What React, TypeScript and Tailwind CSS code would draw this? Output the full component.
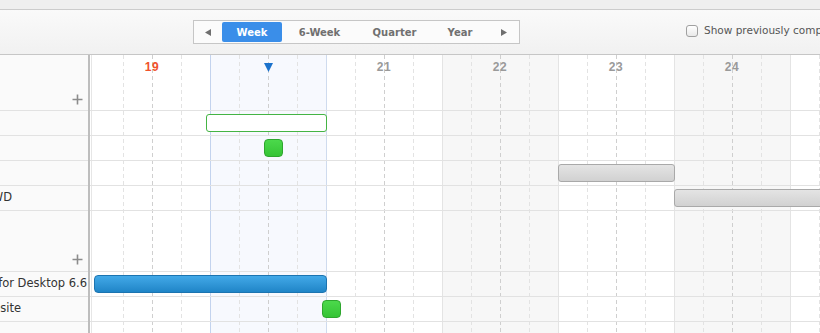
import React from "react";

type Day = {
  n: string;
  bg: string;
  boundary: string;
  label: string;
  marker?: boolean;
};

const days: Day[] = [
  { n: "19", bg: "bg-white", boundary: "bg-transparent", label: "text-[#f0522c]" },
  { n: "", bg: "bg-[#f7f9fe]", boundary: "bg-[#c3d3ee]", label: "text-[#999999]", marker: true },
  { n: "21", bg: "bg-white", boundary: "bg-[#cfdbee]", label: "text-[#9a9a9a]" },
  { n: "22", bg: "bg-[#f7f7f7]", boundary: "bg-[#e4e4e4]", label: "text-[#9a9a9a]" },
  { n: "23", bg: "bg-white", boundary: "bg-[#e4e4e4]", label: "text-[#9a9a9a]" },
  { n: "24", bg: "bg-[#f7f7f7]", boundary: "bg-[#e4e4e4]", label: "text-[#9a9a9a]" },
  { n: "", bg: "bg-white", boundary: "bg-[#e4e4e4]", label: "text-[#9a9a9a]" },
];

const dashLight =
  "w-px shrink-0 bg-[repeating-linear-gradient(to_bottom,#e3e3e3_0_4px,transparent_4px_7px)]";
const dashDark =
  "w-px shrink-0 bg-[repeating-linear-gradient(to_bottom,#cfcfcf_0_4px,transparent_4px_7px)]";

function DayColumn({ d }: { d: Day }) {
  return (
    <div className={`flex h-full w-[116px] shrink-0 ${d.bg}`}>
      <div className={`w-px shrink-0 ${d.boundary}`} />
      <div className="w-[28px] shrink-0" />
      <div className={dashLight} />
      <div className="w-[28px] shrink-0" />
      <div className={dashDark} />
      <div className="w-[28px] shrink-0" />
      <div className={dashLight} />
      <div className="w-[28px] shrink-0" />
    </div>
  );
}

function Plus() {
  return (
    <svg width="11" height="11" viewBox="0 0 11 11">
      <path d="M5.5 0.5v10M0.5 5.5h10" stroke="#8c8c8c" strokeWidth="1.6" />
    </svg>
  );
}

function Label({ end, text }: { end: string; text: string }) {
  return (
    <div className={`flex ${end} justify-end whitespace-nowrap text-[11.5px] text-[#333333]`}>
      {text}
    </div>
  );
}

export default function App() {
  const rowLine = "border-b border-[#e2e2e2]";
  const seg = "flex shrink-0 justify-center whitespace-nowrap text-[10px] font-bold";
  return (
    <div
      className="relative h-[333px] w-[820px] overflow-hidden bg-white"
      style={{ fontFamily: '"DejaVu Sans", Verdana, sans-serif' }}
    >
      {/* top strip */}
      <div className="h-[10px] border-b border-[#cccccc] bg-[#efefef]" />
      {/* toolbar */}
      <div className="flex h-[45px] items-start border-b border-[#c6c6c6] bg-linear-to-b from-[#fafafa] to-[#f1f1f1]">
        <div className="ml-[193px] mt-[10px] flex h-[24px] w-[327px] shrink-0 items-center border border-[#c6c6c6] bg-[#fbfbfb]">
          <div className="flex w-[28px] shrink-0 justify-center">
            <svg width="6" height="7" viewBox="0 0 6 7">
              <path d="M6 0L0 3.5L6 7Z" fill="#6f6f6f" />
            </svg>
          </div>
          <div className={`${seg} h-[20px] w-[60px] items-center rounded-[2px] bg-[#3a8ee9] text-white`}>
            Week
          </div>
          <div className={`${seg} w-[75px] text-[#707070]`}>6-Week</div>
          <div className={`${seg} w-[75px] text-[#707070]`}>Quarter</div>
          <div className={`${seg} w-[56px] text-[#707070]`}>Year</div>
          <div className="flex w-[31px] shrink-0 justify-center">
            <svg width="6" height="7" viewBox="0 0 6 7">
              <path d="M0 0L6 3.5L0 7Z" fill="#6f6f6f" />
            </svg>
          </div>
        </div>
        <div className="ml-[166px] mt-[13px] flex shrink-0 items-center gap-[6px]">
          <div className="h-[12px] w-[12px] shrink-0 rounded-[3px] border border-[#a0a0a0] bg-linear-to-b from-white to-[#e9e9e9]" />
          <span className="whitespace-nowrap text-[10.5px] text-[#555555]">
            Show previously completed
          </span>
        </div>
      </div>

      {/* main */}
      <div className="flex h-[278px]">
        {/* left panel */}
        <div className="w-[90px] shrink-0 overflow-hidden border-r-2 border-[#bdbdbd] bg-[#fafafa]">
          <div className={`flex h-[56px] items-end justify-end pb-[5px] pr-[5px] ${rowLine}`}>
            <Plus />
          </div>
          <div className={`h-[25px] ${rowLine}`} />
          <div className={`h-[25px] ${rowLine}`} />
          <div className={`h-[25px] ${rowLine}`} />
          <div className={`flex h-[25px] items-center ${rowLine}`}>
            <Label end="w-[12px]" text="Submit WD" />
          </div>
          <div className={`flex h-[61px] items-end justify-end pb-[6px] pr-[5px] ${rowLine}`}>
            <Plus />
          </div>
          <div className={`flex h-[25px] items-center ${rowLine}`}>
            <Label end="w-[87px]" text="Release for Desktop 6.6" />
          </div>
          <div className={`flex h-[25px] items-center ${rowLine}`}>
            <Label end="w-[21px]" text="Update Website" />
          </div>
          <div className={`h-[25px] ${rowLine}`} />
        </div>

        {/* grid */}
        <div className="relative flex-1 overflow-hidden">
          {/* background columns */}
          <div className="absolute inset-0 flex">
            <div className="flex w-[4px] shrink-0 bg-white">
              <div className="w-px" />
              <div className="w-px bg-[#e6e6e6]" />
            </div>
            {days.map((d, i) => (
              <DayColumn key={i} d={d} />
            ))}
          </div>

          {/* rows */}
          <div className="relative">
            <div className={`flex h-[56px] ${rowLine}`}>
              <div className="w-[4px] shrink-0" />
              {days.map((d, i) => (
                <div key={i} className="flex w-[116px] shrink-0 justify-center">
                  {d.marker ? (
                    <svg className="mt-[8px]" width="9" height="9" viewBox="0 0 9 9">
                      <path d="M0 0H9L4.5 9Z" fill="#1b72cc" />
                    </svg>
                  ) : (
                    <span
                      className={`mt-[5px] text-[12px] font-bold leading-[14px] tracking-[0.5px] ${d.label}`}
                      style={{ fontFamily: '"Liberation Sans", Arial, sans-serif' }}
                    >
                      {d.n}
                    </span>
                  )}
                </div>
              ))}
            </div>
            <div className={`flex h-[25px] ${rowLine}`}>
              <div className="ml-[116px] mt-[3px] h-[18px] w-[121px] shrink-0 rounded-[3px] border border-[#44b444] bg-white" />
            </div>
            <div className={`flex h-[25px] ${rowLine}`}>
              <div className="ml-[174px] mt-[3px] h-[18px] w-[19px] shrink-0 rounded-[4px] border border-[#2ea62e] bg-linear-to-b from-[#4bd94b] to-[#35c435]" />
            </div>
            <div className={`flex h-[25px] ${rowLine}`}>
              <div className="ml-[468px] mt-[3px] h-[18px] w-[117px] shrink-0 rounded-[3px] border border-[#a9a9a9] bg-linear-to-b from-[#e4e4e4] to-[#d1d1d1]" />
            </div>
            <div className={`flex h-[25px] ${rowLine}`}>
              <div className="ml-[584px] mt-[3px] h-[18px] w-[300px] shrink-0 rounded-[3px] border border-[#a9a9a9] bg-linear-to-b from-[#e4e4e4] to-[#d1d1d1]" />
            </div>
            <div className={`h-[61px] ${rowLine}`} />
            <div className={`flex h-[25px] ${rowLine}`}>
              <div className="ml-[4px] mt-[3px] h-[18px] w-[233px] shrink-0 rounded-[4px] border border-[#1c74b0] bg-linear-to-b from-[#42a9e8] to-[#1f85c7]" />
            </div>
            <div className={`flex h-[25px] ${rowLine}`}>
              <div className="ml-[232px] mt-[3px] h-[18px] w-[19px] shrink-0 rounded-[4px] border border-[#2ea62e] bg-linear-to-b from-[#4bd94b] to-[#35c435]" />
            </div>
            <div className={`h-[25px] ${rowLine}`} />
          </div>
        </div>
      </div>
    </div>
  );
}
